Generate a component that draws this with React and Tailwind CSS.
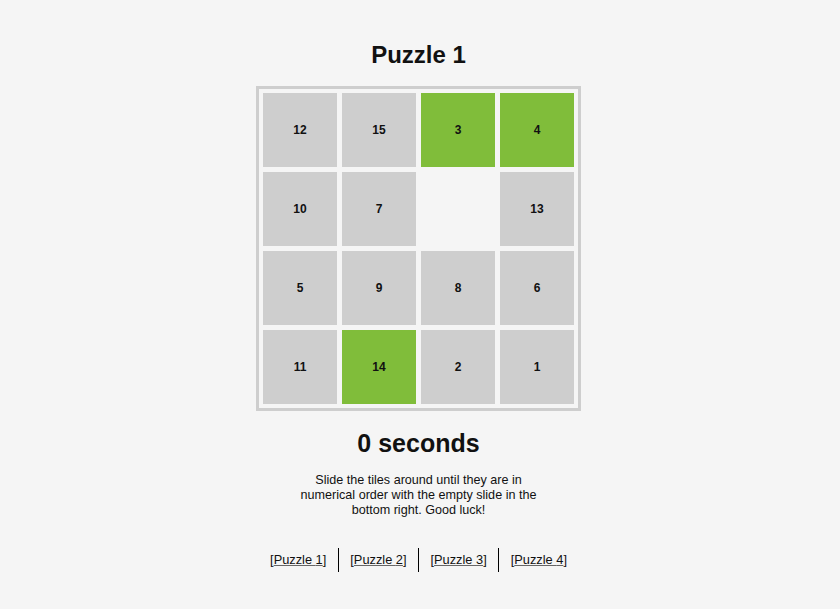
import React from 'react';

const tiles = [12, 15, 3, 4, 10, 7, null, 13, 5, 9, 8, 6, 11, 14, 2, 1];
const inPlace = [3, 4, 14];

export default function App() {
    return (
        <div className="min-h-[609px] bg-[#f5f5f5] pr-[3px] flex flex-col items-center text-[#111] font-['Liberation_Sans',Arial,sans-serif]">
            <h1 className="mt-[41px] text-[24px] leading-[28px] font-bold">Puzzle 1</h1>

            <div className="mt-[17px] border-[3px] border-[#cecece] p-[4px] grid grid-cols-4 gap-[5px]">
                {tiles.map((n, i) =>
                    n === null ? (
                        <div key={i} className="w-[74px] h-[74px]" />
                    ) : (
                        <div
                            key={i}
                            className={
                                'w-[74px] h-[74px] flex items-center justify-center text-[12px] font-bold ' +
                                (inPlace.includes(n) ? 'bg-[#80bd3a]' : 'bg-[#cecece]')
                            }
                        >
                            {n}
                        </div>
                    )
                )}
            </div>

            <h2 className="mt-[18px] text-[25px] leading-[28px] font-bold">0 seconds</h2>

            <p className="mt-[16px] w-[250px] text-center text-[12.6px] leading-[15px]">
                Slide the tiles around until they are in numerical order with the empty slide in the bottom right. Good luck!
            </p>

            <div className="mt-[30px] flex text-[12.8px]">
                {[1, 2, 3, 4].map((p) => (
                    <div
                        key={p}
                        className={
                            'h-[24px] flex items-center px-[11.5px] ' + (p > 1 ? 'border-l border-black' : '')
                        }
                    >
                        [<a href="#" className="underline decoration-[#666]">Puzzle {p}</a>]
                    </div>
                ))}
            </div>
        </div>
    );
}
